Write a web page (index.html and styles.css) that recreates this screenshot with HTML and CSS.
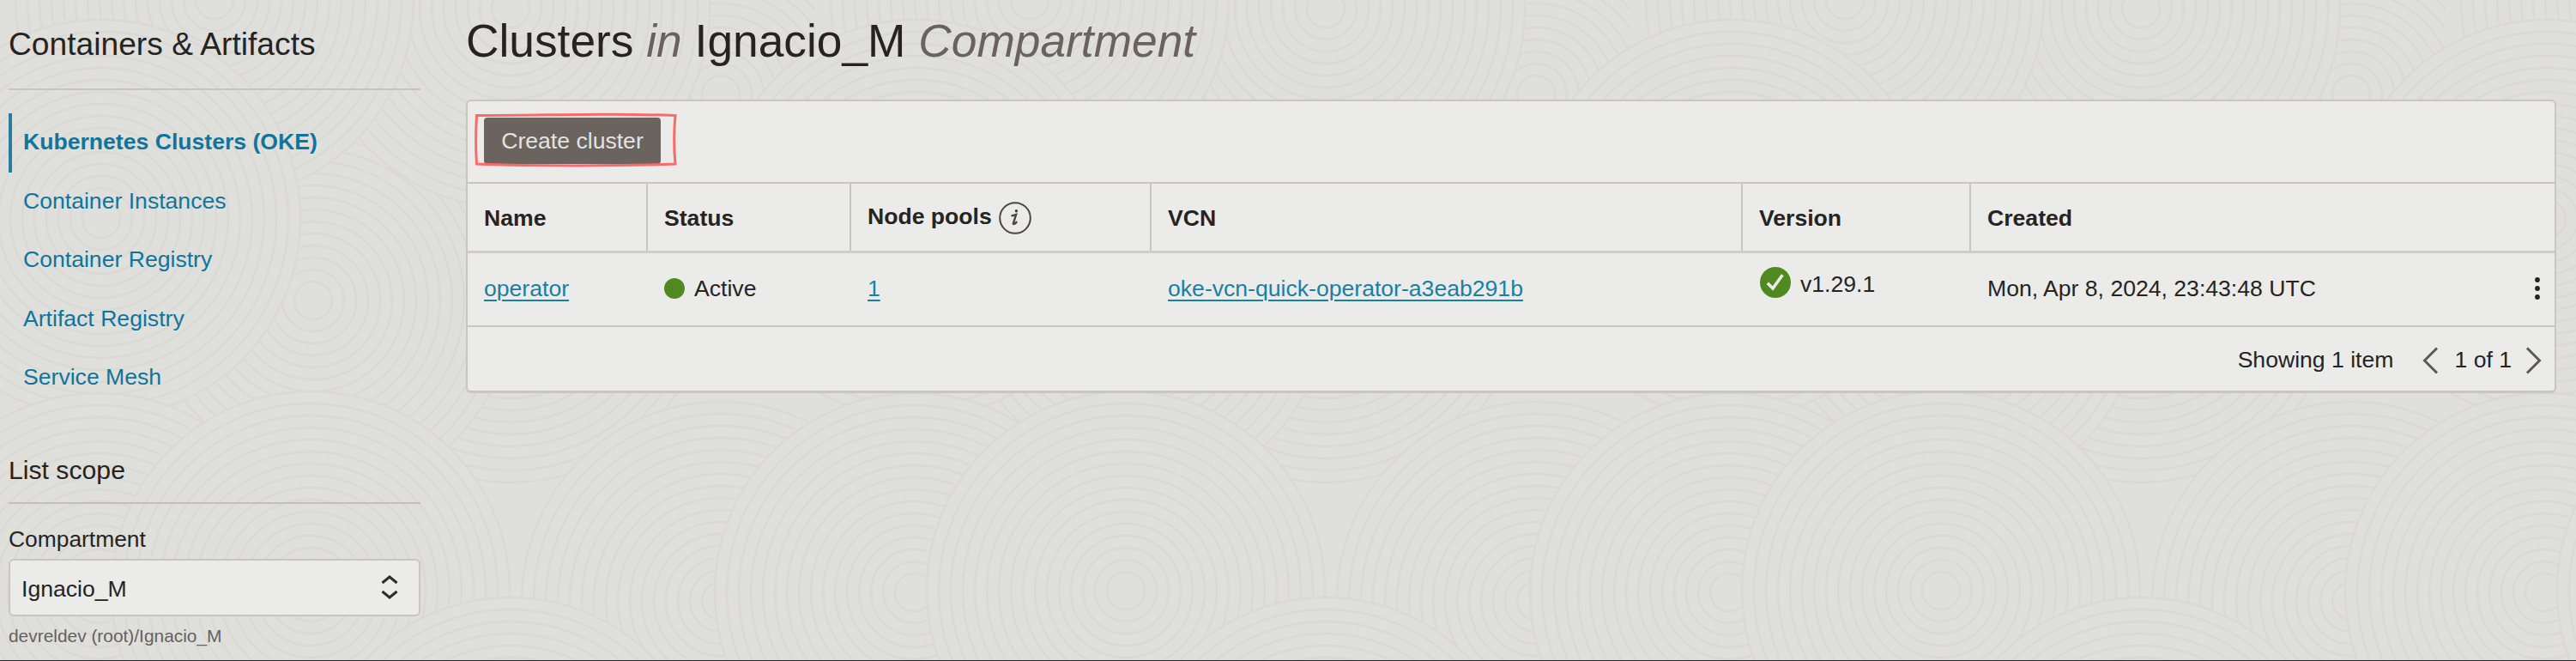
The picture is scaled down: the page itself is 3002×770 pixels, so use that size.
FILE: index.html
```html
<!DOCTYPE html>
<html lang="en">
<head>
<meta charset="utf-8">
<title>Clusters</title>
<link rel="stylesheet" href="styles.css">
</head>
<body>
<svg class="texture" width="3002" height="770" aria-hidden="true">
  <defs>
    <g id="rings">
      <circle r="232"/><circle r="218"/><circle r="204"/><circle r="190"/><circle r="176"/><circle r="162"/><circle r="148"/><circle r="134"/><circle r="120"/><circle r="106"/><circle r="92"/><circle r="78"/><circle r="64"/><circle r="50"/><circle r="36"/><circle r="22"/>
    </g>
    <pattern id="swirl" width="950" height="770" patternUnits="userSpaceOnUse">
      <g class="rings">
        <use href="#rings" x="595" y="330"/>
        <use href="#rings" x="365" y="350"/>
        <use href="#rings" x="840" y="110"/>
        <use href="#rings" x="840" y="700"/>
        <use href="#rings" x="-110" y="700"/>
        <use href="#rings" x="595" y="10"/>
        <use href="#rings" x="250" y="0"/>
        <use href="#rings" x="118" y="255"/>
        <use href="#rings" x="1068" y="255"/>
        <use href="#rings" x="115" y="690"/>
        <use href="#rings" x="1065" y="690"/>
        <use href="#rings" x="362" y="688"/>
        <use href="#rings" x="595" y="928"/>
      </g>
    </pattern>
  </defs>
  <rect width="3002" height="770" fill="url(#swirl)"/>
</svg>
<div class="page">
  <aside class="sidebar">
    <h2 class="side-title">Containers &amp; Artifacts</h2>
    <nav class="nav">
      <a class="nav-item active">Kubernetes Clusters (OKE)</a>
      <a class="nav-item">Container Instances</a>
      <a class="nav-item">Container Registry</a>
      <a class="nav-item">Artifact Registry</a>
      <a class="nav-item">Service Mesh</a>
    </nav>
    <h3 class="scope-title">List scope</h3>
    <div class="label">Compartment</div>
    <div class="select">
      <span>Ignacio_M</span>
      <svg width="20" height="30" viewBox="0 0 20 30"><path d="M1.500 10 10 3l8.500 7M1.500 20l8.500 7 8.500-7"/></svg>
    </div>
    <div class="hint">devreldev (root)/Ignacio_M</div>
  </aside>
  <main class="main">
    <h1 class="heading">Clusters <em>in</em> Ignacio_M <em>Compartment</em></h1>
    <section class="card">
      <div class="toolbar">
        <button class="create">Create cluster</button>
        <svg class="highlight" width="240" height="66" viewBox="0 0 240 66"><path d="M4.500 4.500C80 4 120 3 160 3.200S220 4 236 4.500C234 25 234 40 236 61C170 63.500 70 63.500 4.500 61C3 40 3 30 4.500 4.500Z"/></svg>
      </div>
      <div class="row head">
        <div class="cell">Name</div>
        <div class="cell">Status</div>
        <div class="cell pools">Node pools
          <svg class="info" width="38" height="38" viewBox="0 0 38 38"><circle cx="19" cy="19" r="17.800"/><path class="stem" d="M15.500 16.300c1.800-.3 3-.8 4.600-1.300l-3.200 10c-.4 1.800 1.900 1.200 3.600-1.200"/><circle class="tittle" cx="20.400" cy="10.800" r="1.700"/></svg>
        </div>
        <div class="cell">VCN</div>
        <div class="cell">Version</div>
        <div class="cell">Created</div>
      </div>
      <div class="row body">
        <div class="cell"><a class="link">operator</a></div>
        <div class="cell status"><i class="dot"></i>Active</div>
        <div class="cell"><a class="link">1</a></div>
        <div class="cell"><a class="link">oke-vcn-quick-operator-a3eab291b</a></div>
        <div class="cell version"><svg width="38" height="38" viewBox="0 0 38 38"><circle cx="19" cy="19" r="18"/><path d="m9.800 19.800 6.200 6.200L27.300 10.200"/></svg><span>v1.29.1</span></div>
        <div class="cell created">Mon, Apr 8, 2024, 23:43:48 UTC
          <svg width="8" height="30" viewBox="0 0 8 30"><circle cx="4" cy="5" r="2.900"/><circle cx="4" cy="15" r="2.900"/><circle cx="4" cy="25" r="2.900"/></svg>
        </div>
      </div>
      <div class="footer">
        <span>Showing 1 item</span>
        <svg class="prev" width="19" height="32" viewBox="0 0 19 32"><path d="M17 1.500 2.500 16 17 30.500"/></svg>
        <span>1 of 1</span>
        <svg class="next" width="19" height="32" viewBox="0 0 19 32"><path d="M2 1.500 16.500 16 2 30.500"/></svg>
      </div>
    </section>
  </main>
</div>
</body>
</html>
```
FILE: styles.css
```css
* { box-sizing: border-box; }
body {
  margin: 0;
  width: 3002px;
  height: 770px;
  overflow: hidden;
  background: #dfdfdc;
  color: #262422;
  font: 26.6px/32px "Liberation Sans", Arial, sans-serif;
}
.texture { position: absolute; left: 0; top: 0; }
.rings { fill: #dfdfdc; stroke: #dad9d6; stroke-width: 2.5; }
.page {
  position: relative;
  display: flex;
  height: 770px;
  border-bottom: 1px solid #262626;
}
.sidebar { width: 543px; padding: 0 53px 0 10px; }
.side-title {
  margin: 0;
  height: 105px;
  padding-top: 29px;
  border-bottom: 2px solid #c9c2be;
  font-size: 37.2px;
  font-weight: 400;
  line-height: 44px;
}
.nav { padding-top: 27px; color: #0f759c; }
.nav-item {
  display: block;
  height: 68.5px;
  padding-left: 17px;
  line-height: 67px;
}
.nav-item.active {
  padding-left: 13px;
  border-left: 4px solid #2b7c9c;
  font-weight: 700;
}
.scope-title {
  margin: 0;
  height: 112.500px;
  padding-top: 55px;
  border-bottom: 2px solid #c5bfbb;
  font-size: 30.2px;
  font-weight: 400;
  line-height: 36px;
}
.label { padding-top: 25px; height: 64px; font-size: 26.4px; }
.select {
  display: flex;
  align-items: center;
  justify-content: space-between;
  height: 67px;
  padding: 2px 24px 0 13px;
  border: 2px solid #cbc5c0;
  border-radius: 6px;
  background: #ebebe9;
}
.select svg { fill: none; stroke: #302e2c; stroke-width: 3; margin-top: -4px; }
.hint { padding-top: 7px; color: #66615d; font-size: 20.9px; }
.main { width: 2436px; }
.heading {
  margin: 0;
  height: 116px;
  padding-top: 17px;
  font-size: 53.3px;
  font-weight: 400;
  line-height: 62px;
}
.heading em { color: #6b625d; }
.card {
  height: 342px;
  border: 2px solid #cbc5c0;
  border-bottom-width: 3px;
  border-radius: 6px;
  background: #ebebe9;
}
.toolbar {
  position: relative;
  height: 96px;
  padding: 19px 0 0 19px;
  border-bottom: 2px solid #cbc5c0;
}
.create {
  width: 206px;
  height: 54px;
  padding: 0;
  border: 0;
  border-radius: 4px;
  background: #6b635e;
  color: #e4e3e1;
  font: inherit;
}
.highlight {
  position: absolute;
  left: 6px;
  top: 12px;
  fill: none;
  stroke: #fb6a6a;
  stroke-width: 3;
}
.row {
  display: grid;
  grid-template-columns: 210px 237px 350px 689px 266px 1fr;
}
.head {
  height: 81px;
  border-bottom: 3px solid #d1ccc8;
  font-weight: 700;
}
.head .cell {
  padding: 24px 0 0 19px;
  border-right: 2px solid #cbc5c0;
}
.head .cell:last-child { border-right: 0; }
.head .pools { display: flex; padding-top: 22px; gap: 8px; }
.info { margin-top: -1px; fill: none; stroke: #4a4745; stroke-width: 2; }
.info .stem { stroke-width: 2.4; stroke-linecap: round; }
.info .tittle { fill: #3f3c3a; stroke: none; }
.body {
  height: 86px;
  border-bottom: 2px solid #c9c6c3;
}
.body .cell { padding: 25px 0 0 19px; }
.link {
  color: #1a7fa5;
  text-decoration: underline;
  text-decoration-thickness: 2px;
  text-underline-offset: 4px;
}
.status { display: flex; gap: 11px; }
.dot {
  width: 24px;
  height: 24px;
  margin-top: 4px;
  border-radius: 50%;
  background: #508920;
}
.body .version { display: flex; gap: 10px; padding-top: 15px; }
.version span { margin-top: 5px; }
.version circle { fill: #508920; }
.version path { fill: none; stroke: #ebebe9; stroke-width: 3.5; }
.body .created {
  display: flex;
  justify-content: space-between;
  padding-right: 16px;
}
.created svg { margin-top: 1px; fill: #262422; }
.footer {
  display: flex;
  justify-content: flex-end;
  padding: 22px 15px 0 0;
}
.footer svg { fill: none; stroke: #5f5752; stroke-width: 3; margin-top: 1px; }
.footer .prev { margin: 1px 18px 0 34px; }
.footer .next { margin-left: 16px; }
```
